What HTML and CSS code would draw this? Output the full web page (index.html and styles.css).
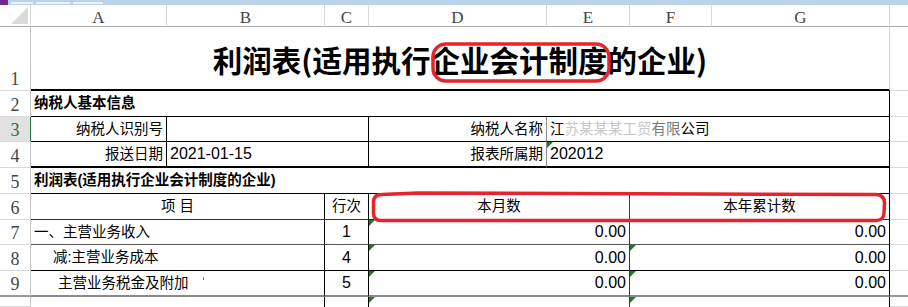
FILE: index.html
```
<!DOCTYPE html>
<html lang="zh-CN">
<head>
<meta charset="utf-8">
<title>利润表</title>
<link rel="stylesheet" href="styles.css">
</head>
<body>
<div class="page">
  <div class="titlebar"><span class="appicon"></span><span class="tbline w1"></span><span class="tbline w2"></span><span class="tbline w3"></span></div>
  <div class="sheet">
    <div class="row rhdr">
      <div class="corner"><svg width="31" height="21" viewBox="0 0 31 21"><polygon points="11,19 28,2 28,19" fill="#dadada"/></svg></div>
      <div class="ch">A</div>
      <div class="ch">B</div>
      <div class="ch">C</div>
      <div class="ch">D</div>
      <div class="ch">E</div>
      <div class="ch">F</div>
      <div class="ch">G</div>
      <div class="ch last"></div>
    </div>
    <div class="row r1">
      <div class="rh">1</div>
      <div class="c s7 title">利润表(适用执行企业会计制度的企业)</div>
      <div class="gl"></div>
    </div>
    <div class="row r2">
      <div class="rh">2</div>
      <div class="c s7 vb bold">纳税人基本信息</div>
      <div class="gl"></div>
    </div>
    <div class="row r3">
      <div class="rh sel">3</div>
      <div class="c vb right">纳税人识别号</div>
      <div class="c s2 vb"></div>
      <div class="c vg right">纳税人名称</div>
      <div class="c s3 vb"><span>江</span><span class="redact">苏某某某工贸</span><span class="redact2">有限</span><span>公司</span></div>
      <div class="gl"></div>
    </div>
    <div class="row r4">
      <div class="rh">4</div>
      <div class="c vb right">报送日期</div>
      <div class="c s2 vb num">2021-01-15</div>
      <div class="c vg right">报表所属期</div>
      <div class="c s3 vb num tri">202012</div>
      <div class="gl"></div>
    </div>
    <div class="row r5">
      <div class="rh">5</div>
      <div class="c s7 vb bold">利润表(适用执行企业会计制度的企业)</div>
      <div class="gl"></div>
    </div>
    <div class="row r6">
      <div class="rh">6</div>
      <div class="c s2 vb center">项 目</div>
      <div class="c vb center">行次</div>
      <div class="c s2 vd center">本月数</div>
      <div class="c s2 vb center">本年累计数</div>
      <div class="gl"></div>
    </div>
    <div class="row r7">
      <div class="rh">7</div>
      <div class="c s2 vb">一、主营业务收入</div>
      <div class="c vb center num">1</div>
      <div class="c s2 vd right num tri">0.00</div>
      <div class="c s2 vb right num">0.00</div>
      <div class="gl"></div>
    </div>
    <div class="row r8">
      <div class="rh">8</div>
      <div class="c s2 vb ind1">减:主营业务成本</div>
      <div class="c vb center num">4</div>
      <div class="c s2 vd right num tri">0.00</div>
      <div class="c s2 vb right num tri">0.00</div>
      <div class="gl"></div>
    </div>
    <div class="row r9">
      <div class="rh">9</div>
      <div class="c s2 vb ind2">主营业务税金及附加<span class="tick"></span></div>
      <div class="c vb center num">5</div>
      <div class="c s2 vd right num tri">0.00</div>
      <div class="c s2 vb right num tri">0.00</div>
      <div class="gl"></div>
    </div>
    <div class="row r10">
      <div class="rh"></div>
      <div class="c s2 vb"></div>
      <div class="c vb"></div>
      <div class="c s2 vd tri"></div>
      <div class="c s2 vb tri"></div>
      <div class="gl"></div>
    </div>
  </div>
  <svg class="marks" width="908" height="307" viewBox="0 0 908 307">
    <rect x="433" y="44" width="176" height="37" rx="13" fill="none" stroke="#e8232b" stroke-width="3.5"/>
    <path d="M382 194.5 L418 193 L876 194.5 Q884.5 195 884.5 203 L884 213 Q883.5 220.5 876 220.5 L381 220.5 Q373.5 220.5 373.5 213 L373.5 202 Q373.5 194.5 382 194.5 Z" fill="none" stroke="#e8232b" stroke-width="3.5"/>
  </svg>
</div>
</body>
</html>
```
FILE: styles.css
```
html, body {
  margin: 0;
  padding: 0;
  background: #ffffff;
}

.page {
  position: relative;
  width: 908px;
  height: 307px;
  overflow: hidden;
  font-family: "Liberation Sans", "Noto Sans CJK SC", sans-serif;
  color: #000;
}

.titlebar {
  height: 5px;
  background: #bcd1ea;
  display: flex;
  align-items: flex-end;
  gap: 3px;
  overflow: hidden;
}

.appicon {
  width: 8px;
  height: 5px;
  background: #6e2a8c;
  flex: none;
}

.tbline {
  height: 2px;
  margin-bottom: 1px;
  background: rgba(255, 255, 255, 0.7);
  flex: none;
}

.w1 { width: 22px; }
.w2 { width: 34px; }
.w3 { width: 30px; }

.sheet {
  display: flex;
  flex-direction: column;
}

.row {
  display: grid;
  grid-template-columns: 31px 136px 158px 44px 178px 83px 82px 178px 18px;
}

.rhdr { height: 21px; }
.r1 { height: 65px; }
.r2 { height: 26px; }
.r3 { height: 25px; }
.r4 { height: 26px; }
.r5 { height: 26px; }
.r6 { height: 26px; }
.r7 { height: 25px; }
.r8 { height: 26px; }
.r9 { height: 26px; }
.r10 { height: 10px; }

.corner, .ch {
  box-sizing: border-box;
  border-right: 1px solid #d9d9d9;
  border-bottom: 1px solid #ababab;
  background: #ffffff;
}

.corner svg { display: block; }

.ch {
  display: flex;
  justify-content: center;
  align-items: center;
  padding-top: 4px;
  font-family: "Liberation Serif", serif;
  font-size: 17px;
  line-height: 1;
  color: #444;
}

.ch.last { border-right: none; }

.rh {
  box-sizing: border-box;
  border-right: 1px solid #c4c4c4;
  border-bottom: 1px solid #d9d9d9;
  display: flex;
  justify-content: center;
  align-items: flex-end;
  padding-bottom: 2px;
  font-family: "Liberation Serif", serif;
  font-size: 18px;
  line-height: 1;
  color: #474747;
  overflow: hidden;
}

.rh.sel {
  background: #e1e1e1;
  color: #217346;
  border-right-color: #217346;
}

.gl {
  box-sizing: border-box;
  border-bottom: 1px solid #dadada;
}

.c {
  position: relative;
  box-sizing: border-box;
  display: flex;
  align-items: center;
  padding: 0 3px;
  font-size: 14.5px;
  line-height: 1;
  white-space: nowrap;
  min-width: 0;
}

.s2 { grid-column: span 2; }
.s3 { grid-column: span 3; }
.s7 { grid-column: span 7; }

.right { justify-content: flex-end; }
.center { justify-content: center; }
.bold { font-weight: 700; }
.num { font-size: 16px; }
.ind1 { padding-left: 22px; }
.ind2 { padding-left: 27px; }

.vb { border-right: 1px solid #000; }
.vg { border-right: 1px solid #8c8c8c; }
.vd { border-right: 1px solid #3a3a3a; }

.r1 .c {
  border-bottom: 2px solid #000;
  border-right: 1px solid #d9d9d9;
}
.r2 .c { border-bottom: 1px solid #000; }
.r3 .c { border-bottom: 1px solid #000; }
.r4 .c { border-bottom: 2px solid #000; }
.r5 .c { border-bottom: 1px solid #000; }
.r6 .c { border-bottom: 1px solid #333; }
.r7 .c { border-bottom: 1px solid #555; }
.r8 .c { border-bottom: 1px solid #000; }
.r9 .c { border-bottom: 2px solid #8a8a8a; }
.r9 .rh, .r9 .gl { border-bottom: 2px solid #9a9a9a; }

.title {
  justify-content: center;
  padding-top: 5px;
  font-family: "Noto Sans CJK SC", sans-serif;
  font-weight: 700;
  font-size: 29.5px;
}

.redact { color: #c8c8c8; }
.redact2 { color: #7a7a7a; }

.tick {
  display: inline-block;
  width: 1px;
  height: 3px;
  background: #777;
  margin-left: 14px;
  align-self: flex-start;
  margin-top: 6px;
}

.tri::before {
  content: "";
  position: absolute;
  left: 0;
  top: 0;
  width: 0;
  height: 0;
  border-top: 6px solid #1f7a2a;
  border-right: 6px solid transparent;
}

.marks {
  position: absolute;
  left: 0;
  top: 0;
  pointer-events: none;
}
```
